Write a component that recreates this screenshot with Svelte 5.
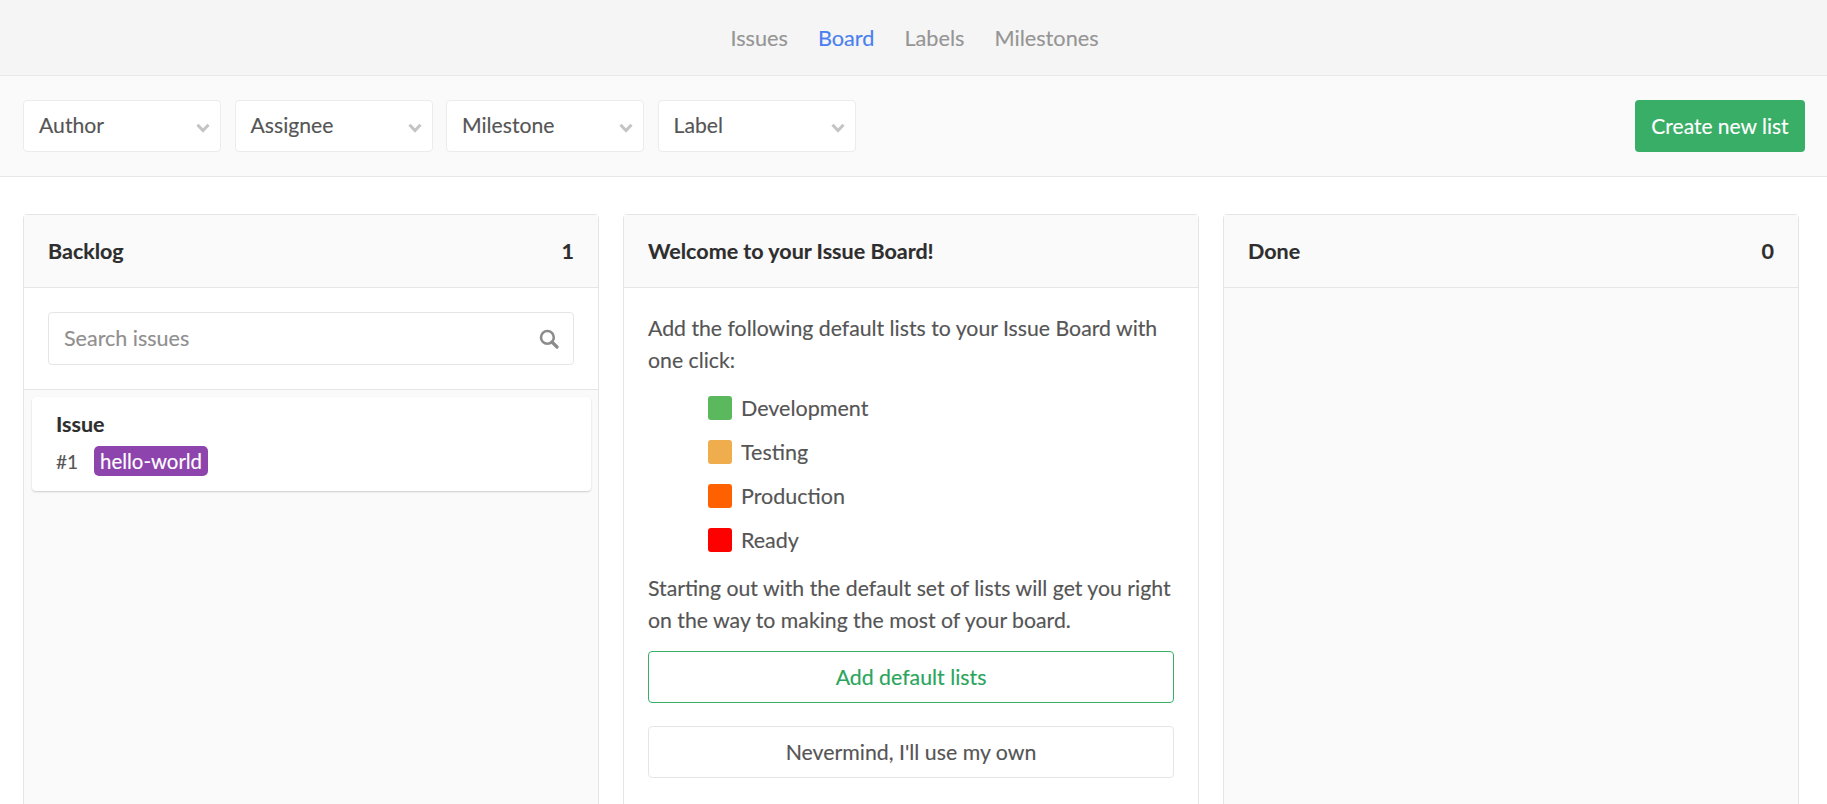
<script>
  const tabs = [
    { name: 'Issues' },
    { name: 'Board', active: true },
    { name: 'Labels' },
    { name: 'Milestones' }
  ];
  const filters = ['Author', 'Assignee', 'Milestone', 'Label'];
  const defaults = [
    { name: 'Development', color: '#5cb85c' },
    { name: 'Testing', color: '#f0ad4e' },
    { name: 'Production', color: '#ff6100' },
    { name: 'Ready', color: '#ff0000' }
  ];
</script>

<div class="page">
  <nav class="tabs">
    {#each tabs as t}
      <a class="tab" class:active={t.active} href="#top">{t.name}</a>
    {/each}
  </nav>

  <div class="filters">
    <div class="dropdowns">
      {#each filters as f}
        <div class="dropdown">
          <span>{f}</span>
          <svg class="chevron" width="14" height="10" viewBox="0 0 14 10" aria-hidden="true">
            <path d="M1.5 1.8 L7 7.6 L12.5 1.8" fill="none" stroke="#c4c4c4" stroke-width="3" />
          </svg>
        </div>
      {/each}
    </div>
    <button class="create">Create new list</button>
  </div>

  <main class="board">
    <section class="column">
      <header class="col-head"><span>Backlog</span><span>1</span></header>
      <div class="search-wrap">
        <div class="search">
          <span>Search issues</span>
          <svg width="20" height="20" viewBox="0 0 20 20" aria-hidden="true">
            <circle cx="8.4" cy="8.4" r="6.4" fill="none" stroke="#8c8c8c" stroke-width="2.6" />
            <path d="M13 13 L18 18" stroke="#8c8c8c" stroke-width="3.2" stroke-linecap="round" />
          </svg>
        </div>
      </div>
      <div class="cards">
        <article class="card">
          <div class="card-title">Issue</div>
          <div class="card-meta">
            <span class="num">#1</span>
            <span class="label">hello-world</span>
          </div>
        </article>
      </div>
    </section>

    <section class="column welcome">
      <header class="col-head"><span>Welcome to your Issue Board!</span></header>
      <div class="welcome-body">
        <p>Add the following default lists to your Issue Board with one click:</p>
        <ul>
          {#each defaults as d}
            <li><span class="swatch" style="background:{d.color}"></span>{d.name}</li>
          {/each}
        </ul>
        <p>Starting out with the default set of lists will get you right on the way to making the most of your board.</p>
        <button class="btn add">Add default lists</button>
        <button class="btn own">Nevermind, I'll use my own</button>
      </div>
    </section>

    <section class="column">
      <header class="col-head"><span>Done</span><span>0</span></header>
    </section>
  </main>
</div>

<style>
  :global(body) {
    margin: 0;
    background: #fff;
  }
  .page {
    height: 804px;
    overflow: hidden;
    display: flex;
    flex-direction: column;
    font-family: Lato, "Noto Sans", sans-serif;
    font-size: 21px;
    color: #555;
    -webkit-text-stroke: 0.15px;
  }
  .tabs {
    height: 75px;
    flex: none;
    box-sizing: border-box;
    display: flex;
    justify-content: center;
    align-items: center;
    gap: 30px;
    padding-left: 2px;
    background: #f5f5f5;
  }
  .tab {
    color: #959595;
    text-decoration: none;
    font-size: 21.7px;
  }
  .tab.active {
    color: #4a7ff0;
  }
  .filters {
    flex: none;
    height: 102px;
    box-sizing: border-box;
    display: flex;
    align-items: center;
    justify-content: space-between;
    padding: 0 22px 0 23px;
    background: #fafafa;
    border-top: 1px solid #e8e8e8;
    border-bottom: 1px solid #e8e8e8;
  }
  .dropdowns {
    display: flex;
    gap: 13.5px;
  }
  .dropdown {
    width: 198px;
    height: 52px;
    box-sizing: border-box;
    display: flex;
    align-items: center;
    justify-content: space-between;
    padding: 0 10px 2px 15px;
    background: #fff;
    border: 1px solid #ececec;
    border-radius: 4px;
    font-size: 21.2px;
  }
  .chevron {
    margin-top: 5px;
  }
  .create {
    width: 170px;
    height: 52px;
    border: 0;
    border-radius: 4px;
    background: #38ae67;
    color: #fff;
    font: inherit;
    font-size: 21px;
    padding: 0 0 2px;
  }
  .board {
    flex: 1;
    min-height: 0;
    display: flex;
    gap: 24px;
    padding: 37px 29px 0 23px;
  }
  .column {
    flex: 0 0 576px;
    height: 640px;
    box-sizing: border-box;
    background: #fafafa;
    border: 1px solid #e5e5e5;
    border-radius: 4px 4px 0 0;
  }
  .welcome {
    background: #fff;
  }
  .col-head {
    height: 73px;
    box-sizing: border-box;
    display: flex;
    align-items: center;
    justify-content: space-between;
    padding: 0 24px;
    background: #fafafa;
    border-bottom: 1px solid #e5e5e5;
    color: #2e2e2e;
    font-weight: 700;
    font-size: 21.5px;
  }
  .search-wrap {
    height: 102px;
    box-sizing: border-box;
    padding: 24px 24px 0;
    background: #fff;
    border-bottom: 1px solid #e5e5e5;
  }
  .search {
    height: 53px;
    box-sizing: border-box;
    display: flex;
    align-items: center;
    justify-content: space-between;
    padding: 0 14px 2px 15px;
    border: 1px solid #e5e5e5;
    border-radius: 4px;
    color: #8f8f8f;
    font-size: 21.5px;
  }
  .search svg {
    margin-top: 2px;
  }
  .cards {
    padding: 7px 7px 0 8px;
  }
  .card {
    height: 94px;
    box-sizing: border-box;
    padding: 14px 24px 0;
    background: #fff;
    border-radius: 4px;
    box-shadow: 0 1px 2px rgba(0, 0, 0, 0.18);
  }
  .card-title {
    color: #2e2e2e;
    font-weight: 700;
    font-size: 21.5px;
    line-height: 26px;
  }
  .card-meta {
    display: flex;
    align-items: center;
    gap: 16px;
    margin-top: 9px;
  }
  .num {
    font-size: 19px;
  }
  .label {
    height: 30px;
    width: 114px;
    display: flex;
    align-items: center;
    justify-content: center;
    box-sizing: border-box;
    background: #8e44ad;
    color: #fff;
    border-radius: 5px;
    font-size: 20.4px;
    padding-bottom: 1px;
  }
  .welcome-body {
    padding: 24px 24px 0;
  }
  p {
    margin: 0;
    line-height: 32px;
    font-size: 21.25px;
  }
  ul {
    list-style: none;
    margin: 0;
    padding: 20px 0 12px 60px;
  }
  li {
    display: flex;
    align-items: center;
    gap: 9px;
    height: 24px;
    margin-bottom: 20px;
    font-size: 21.5px;
  }
  li:last-child {
    margin-bottom: 8px;
  }
  .swatch {
    width: 24px;
    height: 24px;
    border-radius: 3px;
  }
  .btn {
    display: block;
    width: 526px;
    height: 52px;
    box-sizing: border-box;
    background: #fff;
    border-radius: 4px;
    font: inherit;
    font-size: 21.3px;
    padding: 0;
  }
  .add {
    margin-top: 15px;
    border: 1px solid #38ae67;
    color: #2aa55c;
  }
  .own {
    margin-top: 23px;
    border: 1px solid #e5e5e5;
    color: #555;
  }
</style>
